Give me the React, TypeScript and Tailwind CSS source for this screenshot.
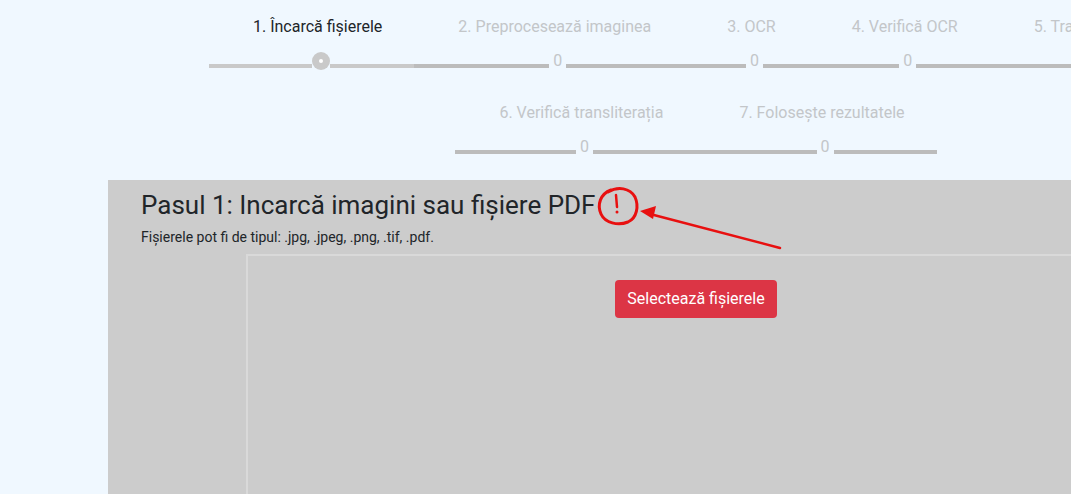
import React from 'react';

type Step = { label: string; active?: boolean };

const steps: Step[] = [
  { label: '1. Încarcă fișierele', active: true },
  { label: '2. Preprocesează imaginea' },
  { label: '3. OCR' },
  { label: '4. Verifică OCR' },
  { label: '5. Transliterează' },
  { label: '6. Verifică transliterația' },
  { label: '7. Folosește rezultatele' },
];

const StepItem: React.FC<{ step: Step }> = ({ step }) => {
  const lineColor = step.active ? 'bg-[#c9c9c9]' : 'bg-[#bcbcbc]';
  return (
    <div className="flex items-end pt-[15px] pb-[15px]">
      <div className={`mb-[3px] h-1 w-[44px] ${lineColor}`} />
      <div className="flex flex-col">
        <div
          className={`h-6 text-center text-base leading-6 whitespace-nowrap ${
            step.active ? 'text-[#212529]' : 'text-[#c3c6c9]'
          }`}
        >
          {step.label}
        </div>
        <div className="mt-3 flex h-5 items-end">
          <div className={`mb-[3px] h-1 w-[6px] ${lineColor}`} />
          <div className={`mb-[3px] h-1 flex-1 ${lineColor}`} />
          {step.active ? (
            <div className="mb-[1px] flex h-[18px] w-[18px] items-center justify-center rounded-full bg-[#c9c9c9]">
              <div className="h-1 w-1 rounded-full bg-white" />
            </div>
          ) : (
            <span className="mx-[4px] h-5 text-base leading-5 text-[#c3c6c9]">0</span>
          )}
          <div className={`mb-[3px] h-1 flex-1 ${lineColor}`} />
        </div>
      </div>
      <div className={`mb-[3px] h-1 w-[32px] ${lineColor}`} />
    </div>
  );
};

const Annotation: React.FC = () => (
  <svg
    className="pointer-events-none absolute left-0 top-0"
    width={1071}
    height={494}
    viewBox="0 0 1071 494"
  >
    <path
      d="M611 190 C600 194 597 205 601 214 C605 223 618 226 628 222 C637 218 639 206 635 197 C630 188 618 186 608 192"
      fill="none"
      stroke="#e81010"
      strokeWidth="3"
      strokeLinecap="round"
    />
    <path d="M616 195 L617 207" stroke="#e81010" strokeWidth="2.5" strokeLinecap="round" />
    <circle cx="617" cy="212" r="1.5" fill="#e81010" />
    <path d="M780 248 L650 214" stroke="#e81010" strokeWidth="2.5" strokeLinecap="round" />
    <path d="M640 211 L656 206 L653 219 Z" fill="#e81010" />
  </svg>
);

const App: React.FC = () => {
  return (
    <div
      className="relative h-[494px] w-full overflow-hidden bg-[#f0f8ff]"
      style={{ fontFamily: 'Roboto, "Liberation Sans", sans-serif' }}
    >
      <div className="ml-[108px] w-[1176px]">
        <div className="flex flex-wrap justify-center">
          {steps.map((s) => (
            <StepItem key={s.label} step={s} />
          ))}
        </div>
      </div>

      <div className="ml-[108px] mt-2 h-[400px] w-[1176px] bg-[#cccccc] pl-[33px] pt-[10px]">
        <h4 className="text-[26px] leading-[31px] text-[#212529]">
          Pasul 1: Incarcă imagini sau fișiere PDF
        </h4>
        <p className="mt-[6px] text-[14px] leading-5 text-[#212529]">
          Fișierele pot fi de tipul: .jpg, .jpeg, .png, .tif, .pdf.
        </p>
        <div className="ml-[105px] mt-[7px] h-[300px] w-[900px] border-2 border-[#d9d9d9] pt-6">
          <div className="flex justify-center">
            <button className="h-[38px] rounded bg-[#dc3545] px-3 text-base text-white">
              Selectează fișierele
            </button>
          </div>
        </div>
      </div>
      <Annotation />
    </div>
  );
};

export default App;
